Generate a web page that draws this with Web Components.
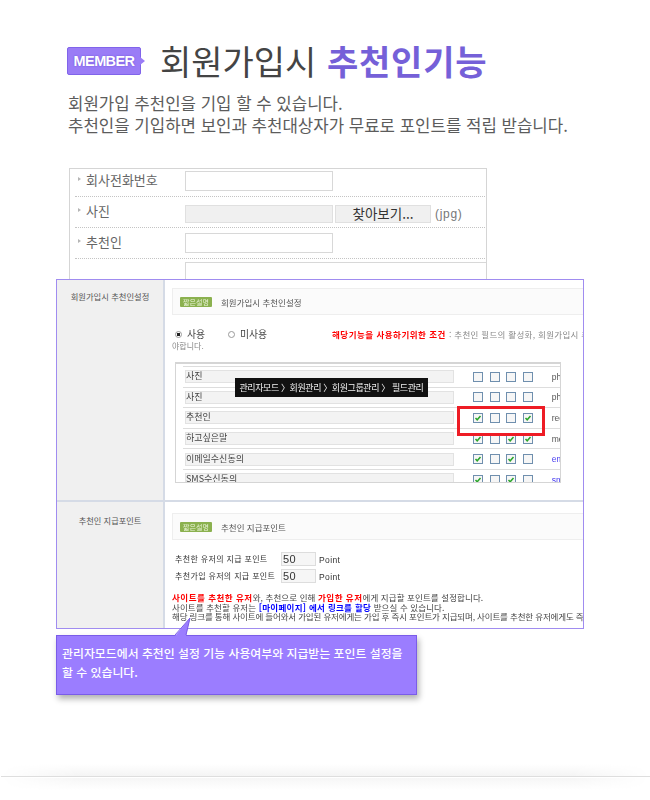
<!DOCTYPE html>
<html lang="ko">
<head>
<meta charset="utf-8">
<title>회원가입시 추천인기능</title>
<style>
    html, body { margin: 0; background: #fff; }
    body { width: 650px; height: 800px; overflow: hidden; font-family: "Noto Sans CJK KR", "Noto Sans", sans-serif; color: #555; }
</style>
</head>
<body>
<member-page>
    <page-title slot="title" badge="MEMBER" plain="회원가입시" strong="추천인기능">
        <div>회원가입 추천인을 기입 할 수 있습니다.</div>
        <div>추천인을 기입하면 보인과 추천대상자가 무료로 포인트를 적립 받습니다.</div>
    </page-title>

    <signup-form slot="form">
        <field-row label="회사전화번호" style="--h:28px;--box:2px;--lab:0px"></field-row>
        <field-row label="사진" kind="file" style="--h:31px;--box:8px;--lab:3px"></field-row>
        <field-row label="추천인" style="--h:31px;--box:5px;--lab:3px"></field-row>
        <field-row kind="last" style="--h:31px;--box:3px;--lab:0px"></field-row>
    </signup-form>

    <admin-panel slot="panel">
        <panel-section label="회원가입시 추천인설정" heading="회원가입시 추천인설정" height="220">
            <usage-options></usage-options>
            <field-table>
                <table-row name="사진" checks="0000" code="ph"></table-row>
                <table-row name="사진" checks="0000" code="ph"></table-row>
                <table-row name="추천인" checks="1001" code="rec"></table-row>
                <table-row name="하고싶은말" checks="1011" code="me"></table-row>
                <table-row name="이메일수신동의" checks="1010" code="em" link></table-row>
                <table-row name="SMS수신동의" checks="1010" code="sm" link></table-row>
            </field-table>
        </panel-section>
        <panel-section label="추천인 지급포인트" heading="추천인 지급포인트" height="129" second>
            <point-form></point-form>
        </panel-section>
        <path-tip>관리자모드 〉회원관리 〉회원그룹관리 〉 필드관리</path-tip>
        <red-mark></red-mark>
    </admin-panel>

    <note-callout slot="note">관리자모드에서 추천인 설정 기능 사용여부와 지급받는 포인트 설정을 할 수 있습니다.</note-callout>
    <foot-line slot="foot"></foot-line>
</member-page>

<script>
const FONT = '"Noto Sans CJK KR", "Noto Sans", sans-serif';

class Base extends HTMLElement {
    constructor() {
        super();
        this.attachShadow({ mode: 'open' });
    }
    connectedCallback() {
        this.render();
    }
}

class MemberPage extends Base {
    render() {
        this.shadowRoot.innerHTML = `
        <style>
            :host { display: flex; flex-direction: column; width: 650px; height: 800px; font-family: ${FONT}; }
            .top { padding: 39px 0 0 67px; height: 168px; box-sizing: border-box; }
            .form { padding-left: 69px; }
            .panel { padding-left: 56px; }
            .note { padding: 6px 0 0 56px; }
            .foot { margin-top: 69px; }
        </style>
        <div class="top"><slot name="title"></slot></div>
        <div class="form"><slot name="form"></slot></div>
        <div class="panel"><slot name="panel"></slot></div>
        <div class="note"><slot name="note"></slot></div>
        <div class="foot"><slot name="foot"></slot></div>
        `;
    }
}

class PageTitle extends Base {
    render() {
        this.shadowRoot.innerHTML = `
        <style>
            :host { display: block; }
            .head { display: flex; align-items: center; height: 44px; }
            .badge {
                position: relative; width: 74px; height: 28px; box-sizing: border-box;
                background: #9a7cf6; border: 1px solid #8064ea; border-radius: 2px;
                color: #fff; font: 700 14.5px/26px "Liberation Sans", sans-serif; letter-spacing: -0.6px;
                text-align: center; text-shadow: 0 0 2px #6a4fd8;
            }
            .badge::after {
                content: ""; position: absolute; left: 72px; top: 9px;
                border: 4px solid transparent; border-left: 5px solid #9a7cf6;
            }
            h1 { margin: 0 0 0 19px; font-size: 34px; font-weight: 400; line-height: 44px; color: #444; white-space: nowrap; }
            b { color: #7560d8; font-weight: 700; letter-spacing: 0.8px; margin-left: 1px; }
            .sub { margin: 9px 0 0 1px; font-size: 16.75px; line-height: 22px; color: #5c5c5c; white-space: nowrap; }
        </style>
        <div class="head">
            <span class="badge">${this.getAttribute('badge')}</span>
            <h1>${this.getAttribute('plain')} <b>${this.getAttribute('strong')}</b></h1>
        </div>
        <div class="sub"><slot></slot></div>
        `;
    }
}

class SignupForm extends Base {
    render() {
        this.shadowRoot.innerHTML = `
        <style>
            :host { display: block; width: 418px; height: 111px; box-sizing: border-box; border: 1px solid #d5d5d5; border-bottom: 0; overflow: hidden; }
        </style>
        <slot></slot>
        `;
    }
}

class FieldRow extends Base {
    render() {
        let kind = this.getAttribute('kind') || '';
        let label = this.getAttribute('label') || '';
        let field = '<span class="box"></span>';
        if (kind === 'file') {
            field = '<span class="file"></span><span class="browse">찾아보기...</span><span class="ext">(jpg)</span>';
        }
        this.shadowRoot.innerHTML = `
        <style>
            :host { display: block; height: var(--h); box-sizing: border-box; margin: 0 1px 0 5px; border-bottom: 1px dotted #c4c4c4; }
            :host([kind="last"]) { border-bottom: 0; margin-right: 0; }
            .row { display: flex; align-items: flex-start; height: 100%; }
            .label { width: 110px; flex: none; display: flex; align-items: center; gap: 4px; padding: 0 0 0 3px; margin-top: var(--lab); height: 20px; box-sizing: border-box; font-size: 13px; color: #666; white-space: nowrap; }
            .label::before { content: ""; border: 2px solid transparent; border-left: 3px solid #b5b5b5; margin-right: -1px; }
            .box { display: block; width: 148px; height: 20px; margin-top: var(--box); box-sizing: border-box; border: 1px solid #d8d8d8; background: #fff; }
            :host([kind="last"]) .box { width: 310px; height: 40px; border-right: 0; }
            .file { width: 148px; height: 18px; margin-top: var(--box); box-sizing: border-box; border: 1px solid #e0e0e0; background: #f0f0f0; }
            .browse { width: 96px; height: 18px; margin: var(--box) 0 0 2px; box-sizing: border-box; border: 1px solid #e0e0e0; background: #f0f0f0; font-size: 13.5px; line-height: 15px; color: #333; text-align: center; }
            .ext { margin: 7px 0 0 4px; font: 12px/20px "Liberation Sans", sans-serif; letter-spacing: 0.7px; color: #777; }
        </style>
        <div class="row">
            <span class="label" style="${label ? '' : 'visibility:hidden'}">${label}</span>
            ${field}
        </div>
        `;
    }
}

class AdminPanel extends Base {
    render() {
        this.shadowRoot.innerHTML = `
        <style>
            :host { display: block; position: relative; width: 528px; height: 350px; box-sizing: border-box; border: 1px solid #a08cf0; background: #fff; overflow: hidden; }
            .inner { filter: blur(0.4px); }
        </style>
        <div class="inner"><slot></slot></div>
        `;
    }
}

class PanelSection extends Base {
    render() {
        let height = this.getAttribute('height');
        this.shadowRoot.innerHTML = `
        <style>
            :host { display: grid; grid-template-columns: 108px 1fr; height: ${height}px; overflow: hidden; }
            :host([second]) { border-top: 2px solid #d5dbe6; }
            .side { background: #f0f0f0; border-right: 2px solid #d5dbe6; text-align: center; font-size: 8.3px; color: #555; padding-top: 10px; }
            :host([second]) .side { padding-top: 12px; font-size: 8.2px; }
            .main { padding: 8px 0 0 7px; min-width: 0; overflow: hidden; }
            :host([second]) .main { padding-top: 11px; }
            .heading { display: flex; align-items: center; height: 25px; border: 1px solid #eee; border-right: 0; background: #fbfbfb; padding-left: 7px; font-size: 8.5px; color: #555; }
            .tag { width: 32px; height: 10px; margin-right: 9px; background: #8bb14f; border-radius: 1px; color: #e8f2d6; font-size: 7px; line-height: 10px; text-align: center; }
        </style>
        <div class="side">${this.getAttribute('label')}</div>
        <div class="main">
            <div class="heading"><span class="tag">짧은설명</span>${this.getAttribute('heading')}</div>
            <slot></slot>
        </div>
        `;
    }
}

class UsageOptions extends Base {
    render() {
        this.shadowRoot.innerHTML = `
        <style>
            :host { display: block; height: 47px; overflow: hidden; }
            .line { display: flex; align-items: center; height: 14px; margin-top: 12px; white-space: nowrap; font-size: 9.8px; color: #444; }
            .radio { flex: none; width: 7px; height: 7px; box-sizing: border-box; border: 1px solid #999; border-radius: 50%; margin: 0 5px 0 3px; background: #fff; }
            .radio.on { background: radial-gradient(circle, #222 0 1.5px, #fff 2px); }
            .gap { width: 38px; flex: none; }
            .gap2 { width: 92px; flex: none; }
            .need { flex: none; color: #f00; font-weight: 700; font-size: 8.5px; letter-spacing: 0.5px; }
            .rest { flex: none; color: #888; font-size: 8.5px; letter-spacing: 0.3px; margin-left: 3px; }
            .more { font-size: 8px; line-height: 9px; color: #888; }
        </style>
        <div class="line">
            <span class="radio on"></span><span class="gap">사용</span>
            <span class="radio"></span><span class="gap2">미사용</span>
            <span class="need">해당기능을 사용하기위한 조건</span>
            <span class="rest">: 추천인 필드의 활성화, 회원가입시 추천</span>
        </div>
        <div class="more">야합니다.</div>
        `;
    }
}

class FieldTable extends Base {
    render() {
        this.shadowRoot.innerHTML = `
        <style>
            :host { display: block; width: 386px; height: 121px; margin-left: 3px; box-sizing: border-box; border: 1px solid #d5d5d5; border-top-width: 2px; overflow: hidden; padding-top: 2px; }
        </style>
        <slot></slot>
        `;
    }
}

class TableRow extends Base {
    render() {
        let checks = (this.getAttribute('checks') || '').split('');
        let boxes = checks.map(c => `<check-mark ${c === '1' ? 'on' : ''}></check-mark>`).join('');
        this.shadowRoot.innerHTML = `
        <style>
            :host { display: flex; align-items: center; height: 20.6px; box-sizing: border-box; margin-left: 7px; border-top: 1px solid #ddd; white-space: nowrap; }
            .name { width: 269px; height: 13px; margin-left: 2px; flex: none; box-sizing: border-box; background: #f3f3f3; border: 1px solid #e2e2e2; font-size: 9px; line-height: 10px; color: #444; }
            .boxes { display: flex; gap: 6.6px; margin-left: 19px; flex: none; }
            .code { margin-left: 19px; font: 8.5px "Liberation Sans", sans-serif; color: #555; }
            :host([link]) .code { color: #4a3ff0; }
        </style>
        <span class="name">${this.getAttribute('name')}</span>
        <span class="boxes">${boxes}</span>
        <span class="code">${this.getAttribute('code')}</span>
        `;
    }
}

class CheckMark extends Base {
    render() {
        let tick = this.hasAttribute('on')
            ? '<path d="M2.5 5 L4.2 6.8 L7.5 3" fill="none" stroke="#2aa52a" stroke-width="1.5"/>'
            : '';
        this.shadowRoot.innerHTML = `
        <style>:host { display: block; width: 10px; height: 10px; } svg { display: block; }</style>
        <svg width="10" height="10" viewBox="0 0 10 10"><rect x="0.5" y="0.5" width="9" height="9" fill="#f6f6f6" stroke="#6f8fae"/>${tick}</svg>
        `;
    }
}

class PointForm extends Base {
    render() {
        this.shadowRoot.innerHTML = `
        <style>
            :host { display: block; padding: 10px 0 0 0; white-space: nowrap; }
            .row { display: flex; align-items: center; height: 17px; font-size: 8px; letter-spacing: 0.35px; color: #333; margin-left: 3px; }
            .row span:first-child { width: 106px; }
            .val { width: 35px; height: 14px; box-sizing: border-box; border: 1px solid #ddd; background: #f6f6f6; font: 11px/12px "Liberation Sans", sans-serif; padding-left: 1px; }
            .pt { margin-left: 3px; font: 8.5px "Liberation Sans", sans-serif; letter-spacing: 0.4px; margin-top: 3px; }
            .desc { margin-top: 9px; font-size: 8.5px; line-height: 9.6px; color: #444; letter-spacing: 0.1px; }
            .l3 { letter-spacing: -0.15px; }
            .r { color: #f00; font-weight: 700; letter-spacing: 0.5px; }
            .b { color: #00f; font-weight: 700; letter-spacing: 0.3px; }
        </style>
        <div class="row"><span>추천한 유저의 지급 포인트</span><span class="val">50</span><span class="pt">Point</span></div>
        <div class="row"><span>추천가입 유저의 지급 포인트</span><span class="val">50</span><span class="pt">Point</span></div>
        <div class="desc">
            <div><span class="r">사이트를 추천한 유저</span>와, 추천으로 인해 <span class="r">가입한 유저</span>에게 지급할 포인트를 설정합니다.</div>
            <div>사이트를 추천할 유저는 <span class="b">[마이페이지] 에서 링크를 할당</span> 받으실 수 있습니다.</div>
            <div class="l3">해당 링크를 통해 사이트에 들어와서 가입된 유저에게는 가입 후 즉시 포인트가 지급되며, 사이트를 추천한 유저에게도 즉시</div>
        </div>
        `;
    }
}

class PathTip extends Base {
    render() {
        this.shadowRoot.innerHTML = `
        <style>
            :host { position: absolute; left: 178px; top: 98px; width: 193px; height: 19px; background: #111; color: #f2f2f2; font-size: 9px; letter-spacing: -0.4px; line-height: 19px; text-align: center; white-space: nowrap; filter: blur(0.3px); }
        </style>
        <slot></slot>
        `;
    }
}

class RedMark extends Base {
    render() {
        this.shadowRoot.innerHTML = `
        <style>
            :host { position: absolute; left: 400px; top: 126px; width: 88px; height: 30px; box-sizing: border-box; border: 3px solid #ee1c25; }
        </style>
        `;
    }
}

class NoteCallout extends Base {
    render() {
        this.shadowRoot.innerHTML = `
        <style>
            :host { display: block; position: relative; width: 361px; height: 60px; box-sizing: border-box; padding: 8px 5px; background: #9b7dff; border: 1px solid #7a5ce8; box-shadow: 2px 4px 6px rgba(0,0,0,.3); color: #fff; font-size: 11.9px; font-weight: 500; line-height: 18.5px; }
            svg { position: absolute; left: 118px; top: -18px; display: block; }
        </style>
        <svg width="18" height="18" viewBox="0 0 18 18"><path d="M0 18 L11 18 L15 0 Z" fill="#9b7dff"/><path d="M0 17 L15 0 L11 17" fill="none" stroke="#7a5ce8"/></svg>
        <slot></slot>
        `;
    }
}

class FootLine extends Base {
    render() {
        this.shadowRoot.innerHTML = `
        <style>
            :host { display: block; width: 650px; }
            .up { height: 12px; background: linear-gradient(#fff, #f4f4f4); -webkit-mask-image: linear-gradient(90deg, transparent, #000 12%, #000 88%, transparent); }
            .line { height: 1px; margin-left: 1px; background: #dedede; }
            .gap { height: 1px; background: #fff; }
            .down { height: 12px; background: linear-gradient(#f6f6f6, #fff); -webkit-mask-image: linear-gradient(90deg, transparent, #000 12%, #000 88%, transparent); }
        </style>
        <div class="up"></div><div class="line"></div><div class="gap"></div><div class="down"></div>
        `;
    }
}

customElements.define('member-page', MemberPage);
customElements.define('page-title', PageTitle);
customElements.define('signup-form', SignupForm);
customElements.define('field-row', FieldRow);
customElements.define('admin-panel', AdminPanel);
customElements.define('panel-section', PanelSection);
customElements.define('usage-options', UsageOptions);
customElements.define('field-table', FieldTable);
customElements.define('table-row', TableRow);
customElements.define('check-mark', CheckMark);
customElements.define('point-form', PointForm);
customElements.define('path-tip', PathTip);
customElements.define('red-mark', RedMark);
customElements.define('note-callout', NoteCallout);
customElements.define('foot-line', FootLine);
</script>
</body>
</html>
